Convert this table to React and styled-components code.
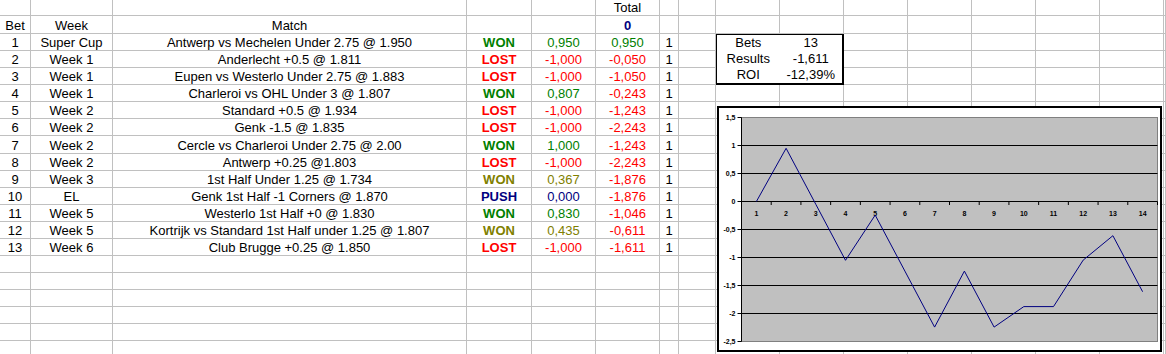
import React from 'react'
import styled, { createGlobalStyle } from 'styled-components'

const GREEN = '#008000'
const RED = '#ff0000'
const OLIVE = '#808000'
const NAVY = '#000080'

const statusColor = {
    win: GREEN,
    half: OLIVE,
    loss: RED,
    push: NAVY,
}

// bet, week, match, result, status, profit, total
const bets = [
    [1, 'Super Cup', 'Antwerp vs Mechelen Under 2.75 @ 1.950', 'WON', 'win', '0,950', '0,950'],
    [2, 'Week 1', 'Anderlecht +0.5 @ 1.811', 'LOST', 'loss', '-1,000', '-0,050'],
    [3, 'Week 1', 'Eupen vs Westerlo Under 2.75 @ 1.883', 'LOST', 'loss', '-1,000', '-1,050'],
    [4, 'Week 1', 'Charleroi vs OHL Under 3 @ 1.807', 'WON', 'win', '0,807', '-0,243'],
    [5, 'Week 2', 'Standard +0.5 @ 1.934', 'LOST', 'loss', '-1,000', '-1,243'],
    [6, 'Week 2', 'Genk -1.5 @ 1.835', 'LOST', 'loss', '-1,000', '-2,243'],
    [7, 'Week 2', 'Cercle vs Charleroi Under 2.75 @ 2.00', 'WON', 'win', '1,000', '-1,243'],
    [8, 'Week 2', 'Antwerp +0.25 @1.803', 'LOST', 'loss', '-1,000', '-2,243'],
    [9, 'Week 3', '1st Half Under 1.25 @ 1.734', 'WON', 'half', '0,367', '-1,876'],
    [10, 'EL', 'Genk 1st Half -1 Corners @ 1.870', 'PUSH', 'push', '0,000', '-1,876'],
    [11, 'Week 5', 'Westerlo 1st Half +0 @ 1.830', 'WON', 'win', '0,830', '-1,046'],
    [12, 'Week 5', 'Kortrijk vs Standard 1st Half under 1.25 @ 1.807', 'WON', 'half', '0,435', '-0,611'],
    [13, 'Week 6', 'Club Brugge +0.25 @ 1.850', 'LOST', 'loss', '-1,000', '-1,611'],
]

const curve = [0, 0.95, -0.05, -1.05, -0.243, -1.243, -2.243, -1.243, -2.243, -1.876, -1.876, -1.046, -0.611, -1.611]

const NCOLS = 16
const NROWS = 21

function buildRows() {
    const rows = []
    const empty = () => Array.from({ length: NCOLS }, () => null)

    const top = empty()
    top[5] = { text: 'Total' }
    rows.push(top)

    const head = empty()
    head[0] = { text: 'Bet' }
    head[1] = { text: 'Week' }
    head[2] = { text: 'Match' }
    head[5] = { text: '0', color: NAVY, bold: true }
    rows.push(head)

    bets.forEach(([n, week, match, result, status, profit, total]) => {
        const r = empty()
        const c = statusColor[status]
        r[0] = { text: n }
        r[1] = { text: week }
        r[2] = { text: match }
        r[3] = { text: result, color: c, bold: true }
        r[4] = { text: profit, color: c }
        r[5] = { text: total, color: total.startsWith('-') ? RED : GREEN }
        r[6] = { text: '1' }
        rows.push(r)
    })

    while (rows.length < NROWS) rows.push(empty())
    return rows
}

export default function App() {
    const rows = buildRows()

    return (
        <>
            <GlobalStyle />
            <Sheet>
                <SummaryBox>
                    <SummaryCell>Bets</SummaryCell>
                    <SummaryCell>13</SummaryCell>
                    <SummaryCell>Results</SummaryCell>
                    <SummaryCell>-1,611</SummaryCell>
                    <SummaryCell>ROI</SummaryCell>
                    <SummaryCell>-12,39%</SummaryCell>
                </SummaryBox>
                {rows.map((row, ri) =>
                    row.map((cell, ci) => {
                        // summary box covers columns I-J on rows 3-5
                        if (ri >= 2 && ri <= 4 && (ci === 8 || ci === 9)) return null
                        return (
                            <Cell key={`${ri}-${ci}`} $color={cell?.color} $bold={cell?.bold}>
                                {cell?.text}
                            </Cell>
                        )
                    })
                )}
                <Chart>
                    <ProfitChart />
                </Chart>
            </Sheet>
        </>
    )
}

function ProfitChart() {
    const left = 22.5
    const right = 438.5
    const top = 9.5
    const step = (right - left) / 14
    const y = v => top + (1.5 - v) * 56
    const cx = i => left + (i + 0.5) * step
    const ticks = [1.5, 1, 0.5, 0, -0.5, -1, -1.5, -2, -2.5]
    const points = curve.map((v, i) => `${cx(i).toFixed(1)},${y(v).toFixed(1)}`).join(' ')

    return (
        <svg width="441" height="242" viewBox="0 0 441 242">
            <rect x={left} y={top} width={right - left} height={224} fill="#c0c0c0" stroke="#808080" />
            {ticks.filter(v => v < 1.5 && v > -2.5).map(v => (
                <line key={v} x1={left} x2={right} y1={y(v)} y2={y(v)} stroke="#000" />
            ))}
            <line x1={left} x2={left} y1={top} y2={y(-2.5)} stroke="#000" />
            {ticks.map(v => (
                <g key={v}>
                    <line x1={left - 4} x2={left} y1={y(v)} y2={y(v)} stroke="#000" />
                    <AxisText x={left - 6} y={y(v) + 2.5} textAnchor="end">
                        {String(v).replace('.', ',')}
                    </AxisText>
                </g>
            ))}
            {Array.from({ length: 15 }, (_, k) => (
                <line key={k} x1={left + k * step} x2={left + k * step} y1={y(0)} y2={y(0) + 3.5} stroke="#000" />
            ))}
            {curve.map((_, i) => (
                <AxisText key={i} x={cx(i)} y={y(0) + 14} textAnchor="middle">
                    {i + 1}
                </AxisText>
            ))}
            <polyline points={points} fill="none" stroke={NAVY} strokeWidth="1" />
        </svg>
    )
}

const GlobalStyle = createGlobalStyle`
    * {
        box-sizing: border-box;
    }

    body {
        margin: 0;
        background: #ffffff;
        font-family: "Liberation Sans", Arial, sans-serif;
        overflow: hidden;
    }
`

const Sheet = styled.div`
    position: relative;
    display: grid;
    grid-template-columns: 31px 82px 354px 65px 64px 64px 19px 37px repeat(7, 64px) 1fr;
    grid-template-rows: 16px 18px;
    grid-auto-rows: 17.08px;
    height: 354px;
    overflow: hidden;
    font-size: 13px;
    color: #000;
`

const Cell = styled.div`
    display: flex;
    align-items: flex-end;
    justify-content: center;
    min-width: 0;
    border-right: 1px solid #c0c0c0;
    border-bottom: 1px solid #c0c0c0;
    line-height: 15px;
    white-space: nowrap;
    color: ${p => p.$color || '#000'};
    font-weight: ${p => (p.$bold ? 700 : 400)};
`

const SummaryBox = styled.div`
    grid-column: 9 / span 2;
    grid-row: 3 / span 3;
    margin: -1px 0 0 -1px;
    border: 2px solid #000;
    background: #ffffff;
    display: grid;
    grid-template-columns: 1fr 1fr;
    grid-template-rows: repeat(3, 1fr);
`

const SummaryCell = styled.div`
    display: flex;
    align-items: flex-end;
    justify-content: center;
    line-height: 15px;
    padding-bottom: 1px;
    white-space: nowrap;
`

const Chart = styled.div`
    position: absolute;
    left: 717px;
    top: 106px;
    width: 445px;
    height: 246px;
    border: 2px solid #000;
    background: #ffffff;

    svg {
        display: block;
    }
`

const AxisText = styled.text`
    font-family: "Liberation Sans", Arial, sans-serif;
    font-size: 7px;
    font-weight: 700;
    fill: #000;
`
